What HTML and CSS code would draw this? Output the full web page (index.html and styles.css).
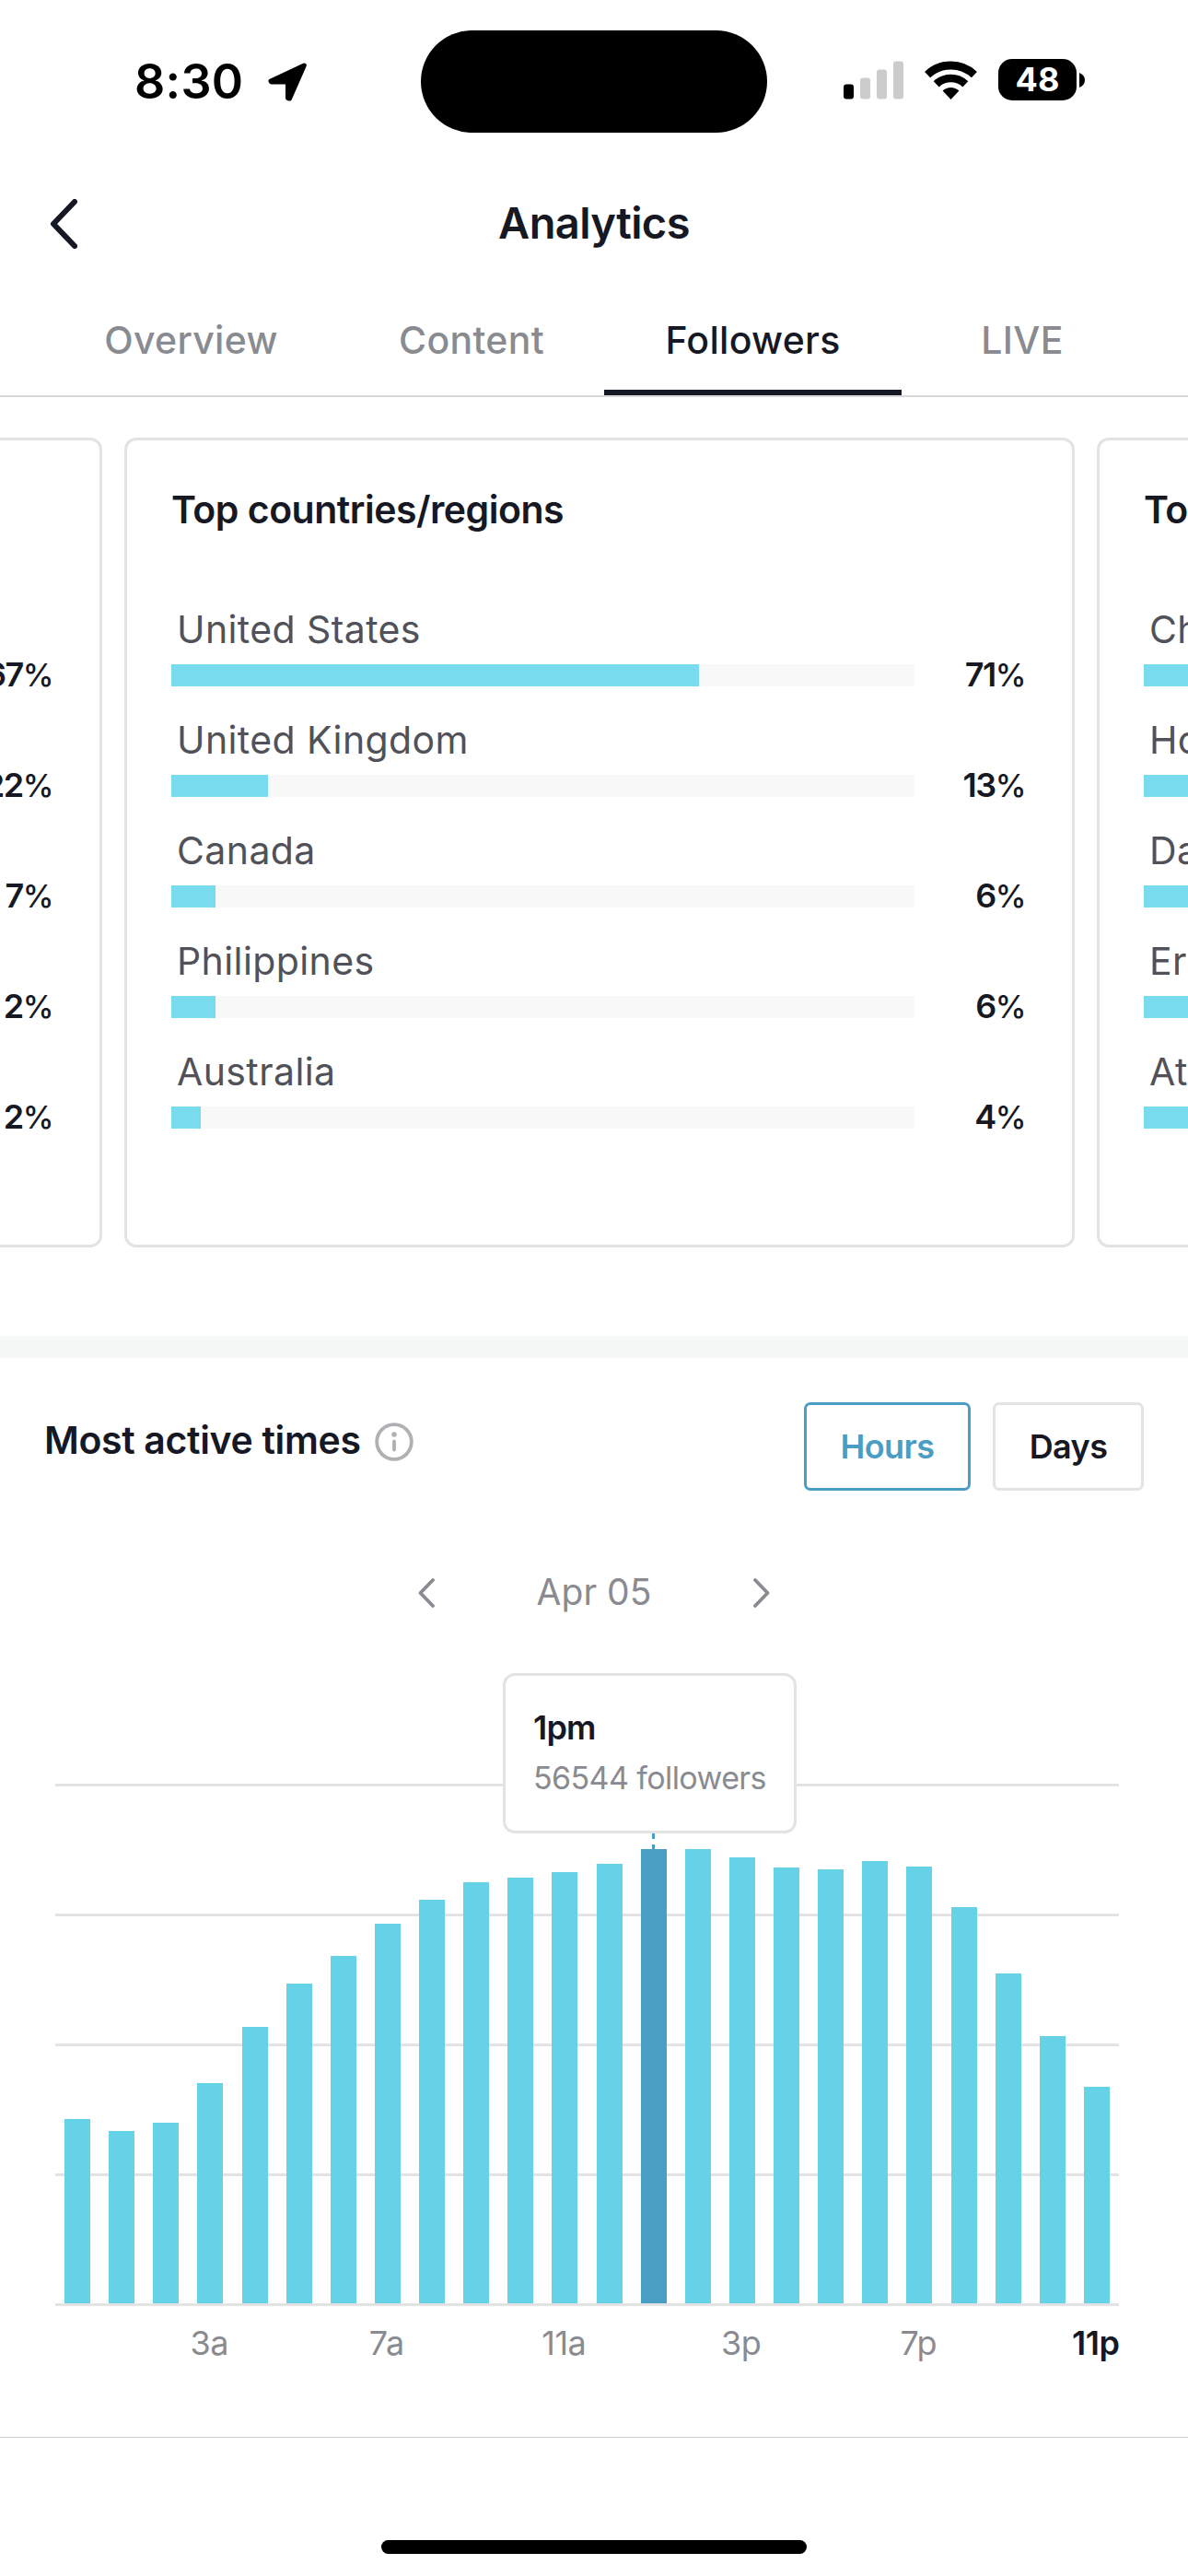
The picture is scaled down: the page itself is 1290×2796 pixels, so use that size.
FILE: index.html
```html
<!DOCTYPE html>
<html lang="en">
<head>
  <meta charset="UTF-8">
  <meta name="viewport" content="width=device-width, initial-scale=1.0">
  <title>Analytics</title>
  <link rel="stylesheet" href="styles.css">
</head>
<body>

  <div class="status-bar">
    <div class="status-left">
      <span class="time">8:30</span>
      <svg width="42" height="42" viewBox="0 0 42 42">
        <path d="M39.3 3 L3 20 L3.5 21 H21.5 V38.5 L23.5 39 Z" fill="#000" stroke="#000" stroke-width="5" stroke-linejoin="round"/>
      </svg>
    </div>
    <div class="island"></div>
    <div class="status-right">
      <svg width="65" height="42" viewBox="0 0 65 42">
        <rect x="0" y="25.5" width="11" height="16" rx="3"/>
        <rect x="18" y="18.5" width="11" height="23" rx="3" fill="#ccc"/>
        <rect x="36" y="9.5" width="11" height="32" rx="3" fill="#ccc"/>
        <rect x="54" y="0.5" width="11" height="41" rx="3" fill="#ccc"/>
      </svg>
      <svg width="57" height="42" viewBox="0 0 57 42">
        <path d="M3.1 15.1 A37 37 0 0 1 53.9 15.1" fill="none" stroke="#000" stroke-width="8.8"/>
        <path d="M12.7 25.3 A23 23 0 0 1 44.3 25.3" fill="none" stroke="#000" stroke-width="8.6"/>
        <path d="M28.5 42 L19.6 32.5 A13 13 0 0 1 37.4 32.5 Z"/>
      </svg>
      <div class="battery">
        <span class="battery-level">48</span>
        <svg width="6" height="16" viewBox="0 0 6 16">
          <path d="M0 0 C8 3 8 13 0 16 Z"/>
        </svg>
      </div>
    </div>
  </div>

  <div class="header">
    <svg class="back" width="30" height="54" viewBox="0 0 30 54">
      <path d="M27 3 L4 27 L27 51" fill="none" stroke="#161823" stroke-width="6" stroke-linecap="round" stroke-linejoin="round"/>
    </svg>
    <h1>Analytics</h1>
  </div>

  <div class="tabs">
    <div class="tab">Overview</div>
    <div class="tab">Content</div>
    <div class="tab active">Followers</div>
    <div class="tab">LIVE</div>
  </div>

  <div class="carousel">
    <div class="card">
      <h2></h2>
      <div class="label"></div>
      <div class="row"><div class="track"></div><span class="percent">67<i>%</i></span></div>
      <div class="label"></div>
      <div class="row"><div class="track"></div><span class="percent">22<i>%</i></span></div>
      <div class="label"></div>
      <div class="row"><div class="track"></div><span class="percent">7<i>%</i></span></div>
      <div class="label"></div>
      <div class="row"><div class="track"></div><span class="percent">2<i>%</i></span></div>
      <div class="label"></div>
      <div class="row"><div class="track"></div><span class="percent">2<i>%</i></span></div>
    </div>

    <div class="card">
      <h2>Top countries/regions</h2>
      <div class="label">United States</div>
      <div class="row"><div class="track"><div class="fill" style="width: 71%"></div></div><span class="percent">71<i>%</i></span></div>
      <div class="label">United Kingdom</div>
      <div class="row"><div class="track"><div class="fill" style="width: 13%"></div></div><span class="percent">13<i>%</i></span></div>
      <div class="label">Canada</div>
      <div class="row"><div class="track"><div class="fill" style="width: 6%"></div></div><span class="percent">6<i>%</i></span></div>
      <div class="label">Philippines</div>
      <div class="row"><div class="track"><div class="fill" style="width: 6%"></div></div><span class="percent">6<i>%</i></span></div>
      <div class="label">Australia</div>
      <div class="row"><div class="track"><div class="fill" style="width: 4%"></div></div><span class="percent">4<i>%</i></span></div>
    </div>

    <div class="card">
      <h2>To</h2>
      <div class="label">Ch</div>
      <div class="row"><div class="track"><div class="fill" style="width: 8%"></div></div></div>
      <div class="label">Ho</div>
      <div class="row"><div class="track"><div class="fill" style="width: 8%"></div></div></div>
      <div class="label">Da</div>
      <div class="row"><div class="track"><div class="fill" style="width: 8%"></div></div></div>
      <div class="label">Er</div>
      <div class="row"><div class="track"><div class="fill" style="width: 8%"></div></div></div>
      <div class="label">At</div>
      <div class="row"><div class="track"><div class="fill" style="width: 8%"></div></div></div>
    </div>
  </div>

  <div class="divider"></div>

  <div class="activity">
    <div class="activity-head">
      <h2>Most active times</h2>
      <svg class="info" width="42" height="42" viewBox="0 0 42 42">
        <circle cx="21" cy="21" r="18.8" fill="none" stroke="#b0b0b4" stroke-width="3.8"/>
        <circle cx="21" cy="13" r="2.8" fill="#b0b0b4"/>
        <path d="M21 20.5 V29.5" stroke="#b0b0b4" stroke-width="3.8" stroke-linecap="round"/>
      </svg>
      <button class="hours">Hours</button>
      <button class="days">Days</button>
    </div>

    <div class="date-nav">
      <svg width="18" height="32" viewBox="0 0 18 32">
        <path d="M16 2 L2.5 16 L16 30" fill="none" stroke="#8a8b91" stroke-width="3.8" stroke-linecap="round" stroke-linejoin="round"/>
      </svg>
      <span class="date">Apr 05</span>
      <svg width="18" height="32" viewBox="0 0 18 32">
        <path d="M2 2 L15.5 16 L2 30" fill="none" stroke="#8a8b91" stroke-width="3.8" stroke-linecap="round" stroke-linejoin="round"/>
      </svg>
    </div>

    <div class="chart" id="chart">
      <div class="marker"></div>
      <div class="tooltip">
        <div class="tooltip-title">1pm</div>
        <div class="tooltip-text">56544 followers</div>
      </div>
    </div>

    <div class="axis">
      <span>3a</span>
      <span>7a</span>
      <span>11a</span>
      <span>3p</span>
      <span>7p</span>
      <span class="current">11p</span>
    </div>
  </div>

  <div class="bottom">
    <div class="home-indicator"></div>
  </div>

  <script>
    // bar heights in px, midnight to 11pm
    var hours = [200.3, 187.5, 196, 239, 300.3, 346.7, 377, 412, 438, 456.7, 461.7, 467.7,
      476.7, 493.5, 493.5, 484, 472.7, 471.5, 480.3, 473.7, 430, 358, 290, 234.6];
    var selected = 13;
    var chart = document.getElementById('chart');

    for (var i = 0; i < hours.length; i++) {
      var bar = document.createElement('div');
      bar.className = i === selected ? 'bar selected' : 'bar';
      bar.style.height = hours[i] + 'px';
      chart.appendChild(bar);
    }
  </script>

</body>
</html>
```
FILE: styles.css
```css
* {
  box-sizing: border-box;
}

body {
  margin: 0;
  width: 1290px;
  height: 2796px;
  overflow: hidden;
  background-color: #fff;
  color: #161823;
  font-family: Inter, 'Liberation Sans', sans-serif;
  white-space: nowrap;
}

h1, h2 {
  margin: 0;
}

svg {
  display: block;
  flex: none;
}

/* Status bar */
.status-bar {
  display: flex;
  align-items: center;
  height: 177px;
  color: #000;
}

.status-left {
  display: flex;
  align-items: center;
  width: 457px;
  padding-left: 146px;
}

.time {
  width: 145px;
  font-size: 52px;
  font-weight: 600;
  letter-spacing: 0.3px;
}

.island {
  width: 376px;
  height: 111px;
  border-radius: 56px;
  background-color: #000;
}

.status-right {
  display: flex;
  align-items: center;
  gap: 23px;
  padding: 0 0 4px 83px;
}

.battery {
  display: flex;
  align-items: center;
  gap: 3px;
}

.battery-level {
  width: 85px;
  height: 45px;
  border-radius: 15px;
  background-color: #000;
  color: #fff;
  font-size: 36px;
  font-weight: 700;
  line-height: 45px;
  text-align: center;
}

/* Header */
.header {
  display: flex;
  align-items: center;
  height: 128px;
  padding: 0 54px;
}

.header h1 {
  flex: 1;
  margin-right: 30px;
  font-size: 47px;
  font-weight: 600;
  letter-spacing: -0.6px;
  text-align: center;
}

.back {
  margin-top: 4px;
}

.tabs {
  display: flex;
  height: 126px;
  padding-left: 47px;
  border-bottom: 2px solid #d8d8d9;
}

.tab {
  width: 321px;
  color: #8a8b91;
  font-size: 41px;
  font-weight: 500;
  line-height: 128px;
  letter-spacing: 0.3px;
  text-align: center;
}

.tab:nth-child(2) {
  width: 288px;
}

.tab:nth-child(4) {
  width: 262px;
}

.tab.active {
  width: 323px;
  border-bottom: 6px solid #161823;
  color: #161823;
}

/* Cards, scrolled to the second one */
.carousel {
  display: flex;
  justify-content: center;
  gap: 24px;
  height: 1019px;
  padding: 44px 0 0 12px;
  overflow: hidden;
}

.card {
  flex: none;
  width: 1032px;
  height: 879px;
  padding: 45px 51px 0 48px;
  border: 3px solid #e3e3e4;
  border-radius: 13px;
}

.card h2 {
  height: 60px;
  margin-bottom: 70px;
  font-size: 41px;
  font-weight: 600;
  line-height: 60px;
  letter-spacing: -0.5px;
}

.label {
  height: 60px;
  margin-bottom: 8px;
  padding-left: 6px;
  color: #505159;
  font-size: 41px;
  line-height: 60px;
  letter-spacing: 0.4px;
}

.row {
  display: flex;
  justify-content: space-between;
  height: 24px;
  margin-bottom: 28px;
}

.track {
  width: 807px;
  background-color: #f8f8f8;
}

.fill {
  height: 24px;
  background-color: #78dbee;
}

.percent {
  font-size: 36px;
  font-weight: 600;
  line-height: 23px;
  letter-spacing: -1.5px;
}

.percent i {
  font-size: 34px;
  font-style: normal;
  font-weight: 500;
}

.divider {
  height: 24px;
  background-color: #f6f8f7;
}

/* Most active times */
.activity {
  height: 1171px;
  padding-top: 48px;
}

.activity-head {
  display: flex;
  align-items: flex-start;
  padding: 0 48px;
}

.activity-head h2 {
  margin-top: 11px;
  font-size: 41px;
  font-weight: 600;
  line-height: 60px;
  letter-spacing: -0.35px;
}

.info {
  margin: 22px auto 0 15px;
}

button {
  height: 96px;
  margin-left: 24px;
  padding: 0;
  border: 3px solid #e3e3e4;
  border-radius: 7px;
  background-color: #fff;
  color: #161823;
  font-family: inherit;
  font-size: 36px;
  font-weight: 600;
  letter-spacing: -0.6px;
}

.hours {
  width: 181px;
  border-color: #4a9ec3;
  color: #4a9ec3;
}

.days {
  width: 164px;
}

.date-nav {
  display: flex;
  align-items: center;
  justify-content: center;
  height: 60px;
  margin-top: 79px;
}

.date-nav svg {
  margin-top: 3px;
}

.date {
  width: 346px;
  color: #8a8b91;
  font-size: 39px;
  text-align: center;
}

.chart {
  position: relative;
  display: flex;
  align-items: flex-end;
  justify-content: space-around;
  width: 1155px;
  height: 567px;
  margin: 179px 0 0 60px;
  padding-bottom: 3px;
  background: repeating-linear-gradient(#e3e3e4 0 3px, #fff 3px 141px);
}

.bar {
  width: 28px;
  background-color: #66d2e8;
}

.bar.selected {
  background-color: #4a9ec3;
}

/* sits over the grid lines, above the selected bar */
.tooltip {
  position: absolute;
  left: 486px;
  top: -120px;
  width: 319px;
  height: 174px;
  padding: 28px 0 0 30px;
  border: 3px solid #e3e3e4;
  border-radius: 13px;
  background-color: #fff;
}

.tooltip-title {
  font-size: 36px;
  font-weight: 600;
  line-height: 56px;
  letter-spacing: -0.8px;
}

.tooltip-text {
  color: #8a8b91;
  font-size: 34px;
  line-height: 54px;
  letter-spacing: -0.6px;
}

.marker {
  position: absolute;
  left: 648px;
  top: 54px;
  width: 3px;
  height: 18px;
  background: repeating-linear-gradient(#4a9ec3 0 6px, #fff 6px 12px);
}

.axis {
  display: flex;
  margin: 15px 0 0 131px;
}

.axis span {
  width: 192.5px;
  color: #8a8b91;
  font-size: 36px;
  line-height: 50px;
  letter-spacing: -0.5px;
  text-align: center;
}

.axis .current {
  color: #161823;
  font-weight: 600;
}

.bottom {
  height: 151px;
  padding-top: 111px;
  border-top: 1px solid #cfcfd1;
}

.home-indicator {
  width: 462px;
  height: 15px;
  margin: 0 auto;
  border-radius: 8px;
  background-color: #000;
}
```
